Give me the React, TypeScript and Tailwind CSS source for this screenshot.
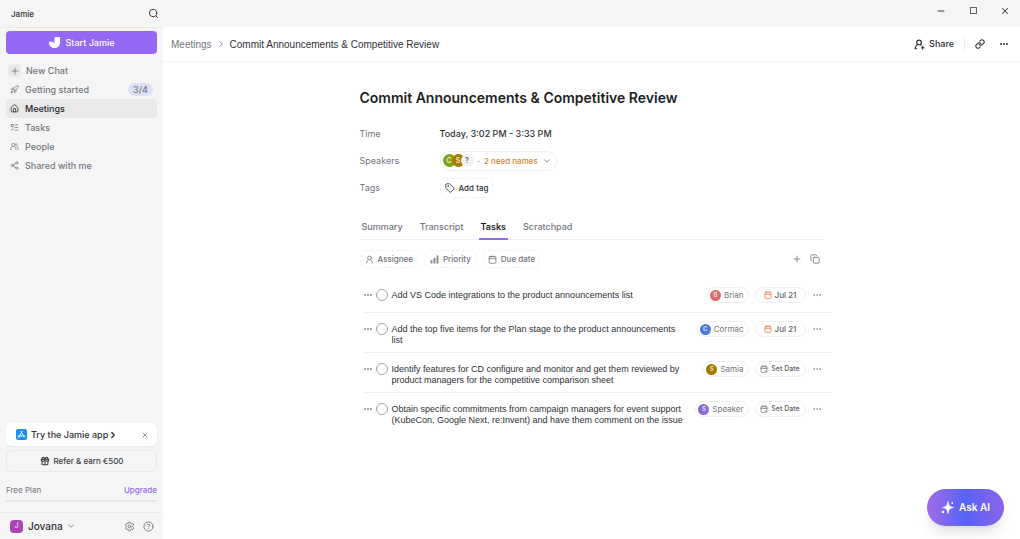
import { useState } from 'react'
import type { ReactNode } from 'react'
import {
  Calendar,
  CalendarPlus,
  ChevronDown,
  ChevronRight,
  CircleHelp,
  Copy,
  Ellipsis,
  Gift,
  House,
  Link,
  ListTodo,
  Minus,
  Plus,
  Rocket,
  Search,
  Settings,
  Share2,
  Tag,
  X,
} from 'lucide-react'

interface Task {
  title: string
  assignee: string
  color: string
  due?: string
}

const tabs = ['Summary', 'Transcript', 'Tasks', 'Scratchpad']

const tasks: Task[] = [
  {
    title: 'Add VS Code integrations to the product announcements list',
    assignee: 'Brian',
    color: 'bg-[#dc6b6e]',
    due: 'Jul 21',
  },
  {
    title: 'Add the top five items for the Plan stage to the product announcements list',
    assignee: 'Cormac',
    color: 'bg-[#4a7bd5]',
    due: 'Jul 21',
  },
  {
    title:
      'Identify features for CD configure and monitor and get them reviewed by product managers for the competitive comparison sheet',
    assignee: 'Samia',
    color: 'bg-[#a87900]',
  },
  {
    title:
      'Obtain specific commitments from campaign managers for event support (KubeCon, Google Next, re:Invent) and have them comment on the issue',
    assignee: 'Speaker',
    color: 'bg-[#8b68d8]',
  },
]

interface IconProps {
  className?: string
}

function JamieLogo() {
  return (
    <svg viewBox="0 0 22 22" className="h-[11px] w-[11px]" fill="currentColor" aria-hidden="true">
      <path d="M11 2q0-2 2-2h7q2 0 2 2v9c0 6.500-4 11-10.500 11C5 22 0 18 0 11q0-1.500 1.500-1.500h6q1.500 0 1.500 1.500c0 2 2 2 2 0z" />
    </svg>
  )
}

function AppStoreLogo() {
  return (
    <svg viewBox="0 0 22 22" className="h-[11px] w-[11px]" aria-hidden="true">
      <rect width="22" height="22" rx="4" fill="#1d8df2" />
      <g stroke="#fff" strokeWidth="2" strokeLinecap="round" fill="none">
        <path d="M12 5 7 14M10 5l6 11M4 14h8M15 14h3M6 16.500l-.5 1" />
      </g>
    </svg>
  )
}

function PersonIcon({ className }: IconProps) {
  return (
    <svg viewBox="0 0 24 24" className={className} fill="none" stroke="currentColor" strokeWidth="2" strokeLinecap="round" aria-hidden="true">
      <circle cx="12" cy="8" r="5" />
      <path d="M9 12.500C6 14.500 4.500 17.500 4.500 21M15 12.500c3 2 4.500 5 4.500 8.500" />
    </svg>
  )
}

function PersonPlusIcon({ className }: IconProps) {
  return (
    <svg viewBox="0 0 24 24" className={className} fill="none" stroke="currentColor" strokeWidth="2.500" strokeLinecap="round" aria-hidden="true">
      <circle cx="11" cy="7.500" r="5" />
      <path d="M8 12c-3.500 2-5.500 5-5.500 9H5M14 12l2 1.500M19 16v6M16 19h6" />
    </svg>
  )
}

function PeopleIcon({ className }: IconProps) {
  return (
    <svg viewBox="0 0 24 24" className={className} fill="none" stroke="currentColor" strokeWidth="2" strokeLinecap="round" aria-hidden="true">
      <circle cx="9" cy="8" r="4.500" />
      <path d="M6 12c-3 2-4 4.500-4 8.500h2M12 12c3 2 4 4.500 4 8.500M16 4a4.500 4.500 0 0 1 1.500 8c2.500 1.500 4 4 4.500 7.500" />
    </svg>
  )
}

function BarsIcon() {
  return (
    <svg viewBox="0 0 18 18" className="h-[9px] w-[9px]" fill="currentColor" aria-hidden="true">
      <path d="M1 10h4v7H1zM7 6h4v11H7zM13 1h4v16h-4z" opacity="0.8" />
    </svg>
  )
}

function SparkleIcon() {
  return (
    <svg viewBox="0 0 26 26" className="h-[13px] w-[13px]" fill="currentColor" aria-hidden="true">
      <path d="M14 1c1 8 3 10.500 11 12-8 1.500-10 4-11 12-1-8-3-10.500-11-12 8-1.500 10-4 11-12z" stroke="currentColor" strokeWidth="1.500" strokeLinejoin="round" />
      <circle cx="22.500" cy="4" r="1.800" />
      <circle cx="4" cy="22" r="2.600" />
    </svg>
  )
}

const navItems = [
  { label: 'Getting started', icon: Rocket, badge: '3/4' },
  { label: 'Meetings', icon: House },
  { label: 'Tasks', icon: ListTodo },
  { label: 'People', icon: PeopleIcon },
  { label: 'Shared with me', icon: Share2 },
]

function Chip({ children }: { children: ReactNode }) {
  return (
    <button className="flex h-[18px] items-center gap-1 rounded-md border border-dashed border-[#f0f0f2] px-1 text-[8px] font-medium text-[#6f7178]">
      {children}
    </button>
  )
}

function TaskRow({ task, last }: { task: Task; last: boolean }) {
  return (
    <li className={last ? 'flex min-h-[34px] items-start pt-2 pb-1.5' : 'flex min-h-[34px] items-start border-b border-[#efeff1] pt-2 pb-1.5'}>
      <button aria-label="Task actions" className="-ml-px flex h-4 w-[13px] shrink-0 items-center text-[#8a8c92]">
        <Ellipsis className="h-2.5 w-2.5" strokeWidth={3} />
      </button>
      <input
        type="checkbox"
        aria-label={task.title}
        className="mt-0.5 h-3 w-3 shrink-0 appearance-none rounded-full border border-[#a3a5aa] checked:bg-[#9469f5]"
      />
      <p className="ml-1 flex-1 pt-[3px] font-['Liberation_Sans',sans-serif] text-[9px] leading-[11px] text-[#2e2f33]">{task.title}</p>
      <button className="ml-2.5 flex h-4 shrink-0 items-center gap-[3px] rounded-full border border-[#efeff1] pr-1 pl-0.5 text-[8px] text-[#74767d]">
        <span className={`flex h-[11px] w-[11px] items-center justify-center rounded-full text-[6px] leading-none font-semibold text-white/80 ${task.color}`}>
          {task.assignee[0]}
        </span>
        {task.assignee}
      </button>
      <button
        className={`ml-1.5 flex h-4 w-[51px] shrink-0 items-center justify-center gap-[3px] rounded-full border border-[#efeff1] font-medium text-[#5f6168] ${task.due ? 'text-[8px]' : 'text-[7px]'}`}
      >
        {task.due ? <Calendar className="h-2 w-2 text-[#f0824f]" strokeWidth={2.5} /> : <CalendarPlus className="h-2 w-2" />}
        {task.due ?? 'Set Date'}
      </button>
      <button aria-label="More" className="mr-2.5 ml-1.5 flex h-4 items-center text-[#8a8c92]">
        <Ellipsis className="h-2.5 w-2.5" />
      </button>
    </li>
  )
}

function Sidebar() {
  return (
    <aside className="flex w-[163px] shrink-0 flex-col border-t border-[#eeeeef] bg-[#f5f5f6]">
      <div className="px-1.5 pt-[3px]">
        <button className="flex h-[23px] w-full items-center justify-center gap-1.5 rounded bg-[#9469f5] text-[9px] font-medium text-white">
          <JamieLogo />
          Start Jamie
        </button>
      </div>

      <nav className="mt-[7px] px-1.5 text-[9px] font-medium text-[#74767d]">
        <a href="#new" className="flex h-[19px] items-center gap-[5px] px-0.5">
          <span className="flex h-[13px] w-[13px] items-center justify-center rounded-sm bg-[#e9e9ea]">
            <Plus className="h-2.5 w-2.5" />
          </span>
          New Chat
        </a>
        {navItems.map(({ label, icon: Icon, badge }) => (
          <a
            key={label}
            href="#nav"
            className={
              label === 'Meetings'
                ? 'flex h-[19px] items-center gap-1.5 rounded-sm bg-[#e9e9ea] px-1 text-[#26272b]'
                : 'flex h-[19px] items-center gap-1.5 px-1'
            }
          >
            <Icon className="h-[9px] w-[9px]" />
            {label}
            {badge && <span className="ml-auto rounded-full bg-[#dde1f7] px-[5px] leading-[13px]">{badge}</span>}
          </a>
        ))}
      </nav>

      <div className="mt-auto px-1.5">
        <div className="flex h-[23px] items-center rounded-md bg-white pr-2 pl-2.5 text-[9px] font-medium text-[#2e2f33] shadow-xs">
          <AppStoreLogo />
          <a href="#app" className="ml-1 flex items-center">
            Try the Jamie app
            <ChevronRight className="h-2.5 w-2.5" strokeWidth={3} />
          </a>
          <button aria-label="Dismiss" className="ml-auto text-[#5f6168]">
            <X className="h-2 w-2" />
          </button>
        </div>
        <button className="mt-1 flex h-[22px] w-full items-center justify-center gap-1 rounded-md border border-[#e9e9eb] text-[8px] font-medium text-[#3b3c41]">
          <Gift className="h-2.5 w-2.5" strokeWidth={2.5} />
          Refer &amp; earn €500
        </button>
        <div className="mt-3 flex justify-between text-[8px] leading-3 text-[#74767d]">
          <span>Free Plan</span>
          <a href="#upgrade" className="font-medium text-[#9469f5]">
            Upgrade
          </a>
        </div>
        <div className="mt-1 h-0.5 rounded-full bg-[#e6e6e8]" />
      </div>

      <div className="mt-2.5 flex h-[27px] items-center border-t border-[#ececee] pr-[9px] pl-2.5">
        <span className="flex h-[13px] w-[13px] items-center justify-center rounded-sm bg-[#a844b4] text-[7px] text-white/80">J</span>
        <button className="ml-[5px] flex items-center gap-[3px] text-[10px] font-medium text-[#2e2f33]">
          Jovana
          <ChevronDown className="h-2.5 w-2.5 text-[#74767d]" />
        </button>
        <button aria-label="Settings" className="ml-auto text-[#74767d]">
          <Settings className="h-[11px] w-[11px]" />
        </button>
        <button aria-label="Help" className="ml-2 text-[#74767d]">
          <CircleHelp className="h-[11px] w-[11px]" />
        </button>
      </div>
    </aside>
  )
}

export default function App() {
  const [activeTab, setActiveTab] = useState('Tasks')

  return (
    <div className="flex h-screen flex-col bg-[#f5f5f6] font-['Inter',sans-serif]">
      <div className="flex h-[27px] shrink-0 items-center">
        <div className="flex w-[163px] items-center justify-between pr-1 pl-[11px]">
          <span className="text-[8px] font-medium text-[#2e2f33]">Jamie</span>
          <button aria-label="Search" className="text-[#2e2f33]">
            <Search className="h-[11px] w-[11px]" />
          </button>
        </div>
        <div className="mb-1.5 ml-auto flex items-center gap-[22px] pr-2.5 text-[#3b3c41]">
          <button aria-label="Minimize">
            <Minus className="h-2.5 w-2.5" strokeWidth={2.5} />
          </button>
          <button aria-label="Maximize">
            <svg viewBox="0 0 10 10" className="h-2.5 w-2.5" fill="none" stroke="currentColor" strokeOpacity="0.8" aria-hidden="true">
              <rect x="2.500" y="1.500" width="6" height="6" />
            </svg>
          </button>
          <button aria-label="Close">
            <X className="h-2.5 w-2.5" strokeWidth={2.5} />
          </button>
        </div>
      </div>

      <div className="flex min-h-0 flex-1">
        <Sidebar />

        <main className="relative flex min-w-0 flex-1 flex-col bg-white">
          <header className="flex h-[35px] shrink-0 items-center border-b border-[#f1f1f3] px-2">
            <div className="flex items-center font-['Liberation_Sans',sans-serif] text-[10px]">
              <a href="#meetings" className="text-[#74767d]">
                Meetings
              </a>
              <ChevronRight className="mx-1 h-2.5 w-2.5 text-[#74767d]" />
              <span className="text-[#2e2f33]">Commit Announcements &amp; Competitive Review</span>
            </div>
            <div className="ml-auto flex items-center text-[#2e2f33]">
              <button className="flex items-center gap-1 text-[9px] font-medium">
                <PersonPlusIcon className="h-[11px] w-[11px]" />
                Share
              </button>
              <span className="mx-2.5 h-3 w-px bg-[#eeeef0]" />
              <button aria-label="Copy link">
                <Link className="h-2.5 w-2.5" strokeWidth={2.5} />
              </button>
              <button aria-label="More options" className="ml-3.5 pr-[3px]">
                <Ellipsis className="h-2.5 w-2.5" strokeWidth={3} />
              </button>
            </div>
          </header>

          <div className="mx-auto w-full max-w-[464px] pt-[26px]">
            <h1 className="text-[14px] leading-5 font-semibold text-[#1d1e21]">Commit Announcements &amp; Competitive Review</h1>

            <dl className="mt-3 text-[9px] text-[#74767d]">
              <div className="flex h-[27px] items-center">
                <dt className="w-20">Time</dt>
                <dd className="font-medium text-[#2e2f33]">Today, 3:02 PM - 3:33 PM</dd>
              </div>
              <div className="flex h-[27px] items-center">
                <dt className="w-20">Speakers</dt>
                <dd>
                  <button className="flex h-5 items-center rounded-full border border-[#efeff1] pr-1 pl-0.5 text-[8px] font-medium text-[#d98632]">
                    <span className="flex text-[7px] leading-none font-semibold text-white/80">
                      <span className="flex h-[13px] w-[13px] items-center justify-center rounded-full bg-[#7fa316]">C</span>
                      <span className="-ml-1 flex h-[13px] w-[13px] items-center justify-center rounded-full bg-[#a87900]">S</span>
                      <span className="-ml-1 flex h-[13px] w-[13px] items-center justify-center rounded-full bg-[#f1f1f3] text-[#5f6168]">?</span>
                    </span>
                    <span className="ml-1 flex gap-1">
                      <span>·</span>
                      <span>2 need names</span>
                    </span>
                    <ChevronDown className="ml-1 h-2.5 w-2.5 text-[#74767d]" />
                  </button>
                </dd>
              </div>
              <div className="flex h-7 items-center">
                <dt className="w-20">Tags</dt>
                <dd>
                  <button className="flex h-5 items-center gap-1 rounded-md border border-dashed border-[#f0f0f2] px-1 text-[8px] font-medium text-[#2e2f33]">
                    <Tag className="h-2.5 w-2.5" />
                    Add tag
                  </button>
                </dd>
              </div>
            </dl>

            <div role="tablist" className="mt-[13px] flex gap-[13px] border-b border-[#efeff1] text-[9px] font-medium">
              {tabs.map((tab) => (
                <button
                  key={tab}
                  role="tab"
                  aria-selected={tab === activeTab}
                  onClick={() => setActiveTab(tab)}
                  className={
                    tab === activeTab
                      ? '-mb-px h-[25px] border-b-2 border-[#9469f5] px-0.5 font-semibold text-[#1d1e21]'
                      : '-mb-px h-[25px] border-b-2 border-transparent px-0.5 text-[#74767d]'
                  }
                >
                  {tab}
                </button>
              ))}
            </div>

            <div className="mt-2.5 flex items-center gap-[7px]">
              <Chip>
                <PersonIcon className="h-[9px] w-[9px]" />
                Assignee
              </Chip>
              <Chip>
                <BarsIcon />
                Priority
              </Chip>
              <Chip>
                <Calendar className="h-[9px] w-[9px]" />
                Due date
              </Chip>
              <button aria-label="Add task" className="ml-auto text-[#74767d]">
                <Plus className="h-2.5 w-2.5" />
              </button>
              <button aria-label="Copy tasks" className="mr-1 ml-px text-[#74767d]">
                <Copy className="h-2.5 w-2.5" />
              </button>
            </div>

            <ul className="mt-[11px] -mr-2 ml-1">
              {tasks.map((task, i) => (
                <TaskRow key={task.title} task={task} last={i === tasks.length - 1} />
              ))}
            </ul>
          </div>

          <button className="absolute right-4 bottom-[13px] flex h-[37px] items-center gap-[5px] rounded-full bg-linear-to-r from-[#a06be8] via-[#5563f5] to-[#8a63ea] px-3.5 text-[10px] font-semibold text-white shadow-lg">
            <SparkleIcon />
            Ask AI
          </button>
        </main>
      </div>
    </div>
  )
}
